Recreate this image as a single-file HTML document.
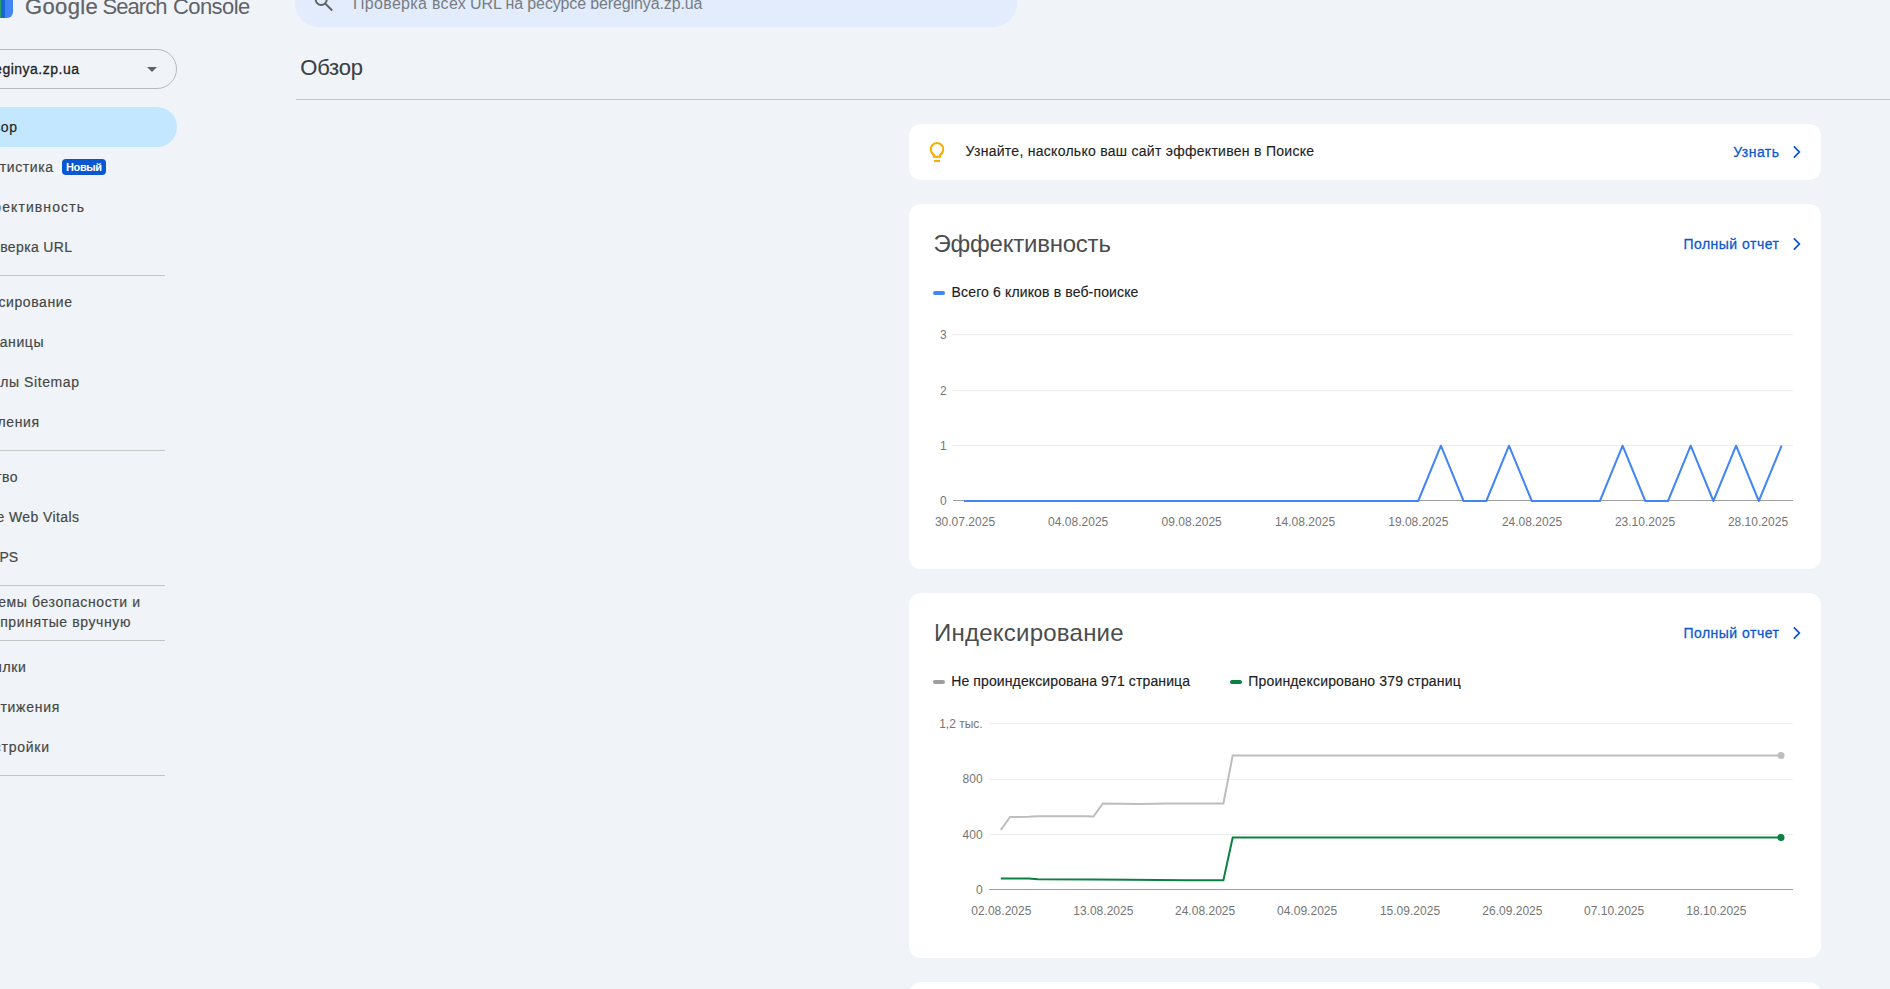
<!DOCTYPE html>
<html lang="ru"><head><meta charset="utf-8"><title>Обзор</title>
<style>
html,body{margin:0;padding:0;}
body{width:1890px;height:989px;overflow:hidden;position:relative;background:#f0f4f9;font-family:"Liberation Sans",sans-serif;}
.t{position:absolute;white-space:nowrap;margin:0;padding:0;}
.abs{position:absolute;}
.card{position:absolute;left:909px;width:912px;background:#fff;border-radius:12px;}
.hr{position:absolute;height:1px;background:#c4c7c5;}
svg{position:absolute;left:0;top:0;overflow:visible;}
</style></head><body>
<div class="abs" style="left:-11px;top:-15px;width:24px;height:33px;border-radius:6px;background:linear-gradient(90deg,#2da160 0,#2da160 12.1px,#1967d2 12.1px,#1967d2 16px,#4285f4 16px);"></div>
<div id="logoA" class="t " style="top:-3.62px;font-size:22px;line-height:22px;color:#5f6368;font-weight:400;letter-spacing:0.349px;-webkit-text-stroke:0.25px #5f6368;left:25.00px;">Google</div>
<div id="logoB" class="t " style="top:-3.62px;font-size:22px;line-height:22px;color:#5f6368;font-weight:400;letter-spacing:-0.964px;left:102.60px;">Search</div>
<div id="logoC" class="t " style="top:-3.62px;font-size:22px;line-height:22px;color:#5f6368;font-weight:400;letter-spacing:-0.553px;left:172.90px;">Console</div>
<div class="abs" style="left:295px;top:-21px;width:722px;height:48px;border-radius:24px;background:#e2ecfc;"></div>
<svg width="1890" height="989" viewBox="0 0 1890 989"><g fill="none" stroke="#5f6368" stroke-width="2"><circle cx="321.2" cy="-0.5" r="5.5"/><path d="M325.2 3.5 L332.2 10.5"/></g></svg>
<div id="searchA" class="t " style="top:-3.84px;font-size:16px;line-height:16px;color:#777c82;font-weight:400;letter-spacing:0.318px;left:353.00px;">Проверка всех</div>
<div id="searchB" class="t " style="top:-3.84px;font-size:16px;line-height:16px;color:#777c82;font-weight:400;letter-spacing:-0.116px;left:470.10px;">URL на ресурсе bereginya.zp.ua</div>
<div id="title" class="t " style="top:57.38px;font-size:22px;line-height:22px;color:#3c4043;font-weight:400;letter-spacing:-0.212px;-webkit-text-stroke:0.1px #3c4043;left:300.30px;">Обзор</div>
<div class="hr" style="left:296px;top:99px;width:1594px;"></div>
<div class="abs" style="left:-60px;top:49px;width:235px;height:38px;border:1px solid #b7babd;border-radius:20px;"></div>
<div id="prop" class="t " style="top:62.15px;font-size:14px;line-height:14px;color:#1f1f1f;font-weight:400;letter-spacing:0.500px;-webkit-text-stroke:0.3px #1f1f1f;right:1810.50px;">bereginya.zp.ua</div>
<svg width="1890" height="989" viewBox="0 0 1890 989"><path d="M147 67 L157 67 L152 72 Z" fill="#5f6368"/></svg>
<div class="abs" style="left:-60px;top:107px;width:237px;height:40px;border-radius:20px;background:#c2e7ff;"></div>
<div id="s1" class="t " style="top:120.15px;font-size:14px;line-height:14px;color:#1f1f1f;font-weight:400;letter-spacing:0.600px;-webkit-text-stroke:0.18px #1f1f1f;right:1872.40px;">Обзор</div>
<div id="s2" class="t " style="top:160.15px;font-size:14px;line-height:14px;color:#444746;font-weight:400;letter-spacing:0.600px;-webkit-text-stroke:0.18px #444746;right:1836.40px;">Статистика</div>
<div id="s3" class="t " style="top:200.15px;font-size:14px;line-height:14px;color:#444746;font-weight:400;letter-spacing:1.100px;-webkit-text-stroke:0.18px #444746;right:1804.90px;">Эффективность</div>
<div id="s4" class="t " style="top:240.15px;font-size:14px;line-height:14px;color:#444746;font-weight:400;letter-spacing:0.350px;-webkit-text-stroke:0.18px #444746;right:1817.65px;">Проверка URL</div>
<div id="s5" class="t " style="top:295.15px;font-size:14px;line-height:14px;color:#444746;font-weight:400;letter-spacing:0.600px;-webkit-text-stroke:0.18px #444746;right:1817.40px;">Индексирование</div>
<div id="s6" class="t " style="top:335.15px;font-size:14px;line-height:14px;color:#444746;font-weight:400;letter-spacing:0.600px;-webkit-text-stroke:0.18px #444746;right:1845.90px;">Страницы</div>
<div id="s7" class="t " style="top:375.15px;font-size:14px;line-height:14px;color:#444746;font-weight:400;letter-spacing:0.600px;-webkit-text-stroke:0.18px #444746;right:1810.40px;">Файлы Sitemap</div>
<div id="s8" class="t " style="top:415.15px;font-size:14px;line-height:14px;color:#444746;font-weight:400;letter-spacing:0.600px;-webkit-text-stroke:0.18px #444746;right:1850.40px;">Удаления</div>
<div id="s9" class="t " style="top:470.15px;font-size:14px;line-height:14px;color:#444746;font-weight:400;letter-spacing:0.600px;-webkit-text-stroke:0.18px #444746;right:1871.80px;">Качество</div>
<div id="s10" class="t " style="top:510.15px;font-size:14px;line-height:14px;color:#444746;font-weight:400;letter-spacing:0.400px;-webkit-text-stroke:0.18px #444746;right:1810.60px;">Core Web Vitals</div>
<div id="s11" class="t " style="top:550.15px;font-size:14px;line-height:14px;color:#444746;font-weight:400;letter-spacing:-0.200px;-webkit-text-stroke:0.18px #444746;right:1872.20px;">HTTPS</div>
<div id="s12" class="t " style="top:595.15px;font-size:14px;line-height:14px;color:#444746;font-weight:400;letter-spacing:0.600px;-webkit-text-stroke:0.18px #444746;right:1749.40px;">Проблемы безопасности и</div>
<div id="s13" class="t " style="top:615.15px;font-size:14px;line-height:14px;color:#444746;font-weight:400;letter-spacing:0.600px;-webkit-text-stroke:0.18px #444746;right:1759.00px;">меры, принятые вручную</div>
<div id="s14" class="t " style="top:660.15px;font-size:14px;line-height:14px;color:#444746;font-weight:400;letter-spacing:0.600px;-webkit-text-stroke:0.18px #444746;right:1863.60px;">Ссылки</div>
<div id="s15" class="t " style="top:700.15px;font-size:14px;line-height:14px;color:#444746;font-weight:400;letter-spacing:0.750px;-webkit-text-stroke:0.18px #444746;right:1829.85px;">Достижения</div>
<div id="s16" class="t " style="top:740.15px;font-size:14px;line-height:14px;color:#444746;font-weight:400;letter-spacing:0.750px;-webkit-text-stroke:0.18px #444746;right:1840.25px;">Настройки</div>
<div class="abs" style="left:62px;top:159px;width:44px;height:16px;border-radius:4px;background:#0b57d0;"></div>
<div id="badge" class="t " style="top:161.69px;font-size:11px;line-height:11px;color:#fff;font-weight:700;letter-spacing:-0.373px;left:66.00px;">Новый</div>
<div class="hr" style="left:0;top:275px;width:165px;"></div>
<div class="hr" style="left:0;top:450px;width:165px;"></div>
<div class="hr" style="left:0;top:585px;width:165px;"></div>
<div class="hr" style="left:0;top:640px;width:165px;"></div>
<div class="hr" style="left:0;top:775px;width:165px;"></div>
<div class="card" style="top:124px;height:56px;"></div>
<div class="card" style="top:204px;height:365px;"></div>
<div class="card" style="top:593px;height:365px;"></div>
<div class="card" style="top:982px;height:100px;"></div>
<svg width="1890" height="989" viewBox="0 0 1890 989"><g fill="none" stroke="#f9ab00" stroke-width="2"><path d="M934 156.8 L934 154.8 A6.3 6.3 0 1 1 940 154.8 L940 156.8 Z"/><path d="M934 160.9 L940 160.9"/></g></svg>
<div id="c1" class="t " style="top:144.15px;font-size:14px;line-height:14px;color:#1f1f1f;font-weight:400;letter-spacing:0.276px;-webkit-text-stroke:0.15px #1f1f1f;left:965.60px;">Узнайте, насколько ваш сайт эффективен в Поиске</div>
<div id="c1a" class="t " style="top:144.95px;font-size:14px;line-height:14px;color:#0b57d0;font-weight:400;letter-spacing:0.449px;-webkit-text-stroke:0.28px #0b57d0;left:1733.30px;">Узнать</div>
<svg width="1890" height="989" viewBox="0 0 1890 989"><path d="M1793.9 146.4 L1799.3 152 L1793.9 157.6" fill="none" stroke="#0b57d0" stroke-width="1.8"/><path d="M1793.9 238.4 L1799.3 244 L1793.9 249.6" fill="none" stroke="#0b57d0" stroke-width="1.8"/><path d="M1793.9 627.4 L1799.3 633 L1793.9 638.6" fill="none" stroke="#0b57d0" stroke-width="1.8"/></svg>
<div id="h2" class="t " style="top:231.68px;font-size:24px;line-height:24px;color:#4a4d50;font-weight:400;letter-spacing:-0.226px;left:933.50px;">Эффективность</div>
<div id="h2a" class="t " style="top:237.15px;font-size:14px;line-height:14px;color:#0b57d0;font-weight:400;letter-spacing:0.496px;-webkit-text-stroke:0.28px #0b57d0;left:1683.40px;">Полный отчет</div>
<div class="abs" style="left:933px;top:291px;width:12px;height:4px;border-radius:2px;background:#4285f4;"></div>
<div id="l1" class="t " style="top:284.95px;font-size:14px;line-height:14px;color:#202124;font-weight:400;letter-spacing:0.141px;-webkit-text-stroke:0.15px #202124;left:951.60px;">Всего 6 кликов в веб-поиске</div>
<svg width="1890" height="989" viewBox="0 0 1890 989"><path d="M953 334.5 H1793" stroke="#ececec" stroke-width="1"/><path d="M953 390.5 H1793" stroke="#ececec" stroke-width="1"/><path d="M953 445.5 H1793" stroke="#ececec" stroke-width="1"/><path d="M953 500.5 H1793" stroke="#9e9e9e" stroke-width="1"/><polyline points="964.0,501.00 986.7,501.00 1009.4,501.00 1032.1,501.00 1054.8,501.00 1077.5,501.00 1100.3,501.00 1123.0,501.00 1145.7,501.00 1168.4,501.00 1191.1,501.00 1213.8,501.00 1236.5,501.00 1259.2,501.00 1281.9,501.00 1304.7,501.00 1327.4,501.00 1350.1,501.00 1372.8,501.00 1395.5,501.00 1418.2,501.00 1440.9,445.67 1463.6,501.00 1486.3,501.00 1509.0,445.67 1531.8,501.00 1554.5,501.00 1577.2,501.00 1599.9,501.00 1622.6,445.67 1645.3,501.00 1668.0,501.00 1690.7,445.67 1713.4,501.00 1736.1,445.67 1758.8,501.00 1781.6,445.67" fill="none" stroke="#4285f4" stroke-width="2" stroke-linejoin="round"/></svg>
<div id="y1_0" class="t " style="top:328.64px;font-size:12px;line-height:12px;color:#757575;font-weight:400;right:943.30px;">3</div>
<div id="y1_1" class="t " style="top:384.64px;font-size:12px;line-height:12px;color:#757575;font-weight:400;right:943.30px;">2</div>
<div id="y1_2" class="t " style="top:439.64px;font-size:12px;line-height:12px;color:#757575;font-weight:400;right:943.30px;">1</div>
<div id="y1_3" class="t " style="top:494.64px;font-size:12px;line-height:12px;color:#757575;font-weight:400;right:943.30px;">0</div>
<div id="x1_0" class="t " style="top:515.64px;font-size:12px;line-height:12px;color:#757575;font-weight:400;letter-spacing:0.015px;left:865.00px;width:200px;text-align:center;text-indent:0.015px;">30.07.2025</div>
<div id="x1_1" class="t " style="top:515.64px;font-size:12px;line-height:12px;color:#757575;font-weight:400;letter-spacing:0.015px;left:978.20px;width:200px;text-align:center;text-indent:0.015px;">04.08.2025</div>
<div id="x1_2" class="t " style="top:515.64px;font-size:12px;line-height:12px;color:#757575;font-weight:400;letter-spacing:0.015px;left:1091.70px;width:200px;text-align:center;text-indent:0.015px;">09.08.2025</div>
<div id="x1_3" class="t " style="top:515.64px;font-size:12px;line-height:12px;color:#757575;font-weight:400;letter-spacing:0.015px;left:1205.00px;width:200px;text-align:center;text-indent:0.015px;">14.08.2025</div>
<div id="x1_4" class="t " style="top:515.64px;font-size:12px;line-height:12px;color:#757575;font-weight:400;letter-spacing:0.015px;left:1318.30px;width:200px;text-align:center;text-indent:0.015px;">19.08.2025</div>
<div id="x1_5" class="t " style="top:515.64px;font-size:12px;line-height:12px;color:#757575;font-weight:400;letter-spacing:0.015px;left:1432.00px;width:200px;text-align:center;text-indent:0.015px;">24.08.2025</div>
<div id="x1_6" class="t " style="top:515.64px;font-size:12px;line-height:12px;color:#757575;font-weight:400;letter-spacing:0.015px;left:1545.00px;width:200px;text-align:center;text-indent:0.015px;">23.10.2025</div>
<div id="x1_7" class="t " style="top:515.64px;font-size:12px;line-height:12px;color:#757575;font-weight:400;letter-spacing:0.015px;left:1658.00px;width:200px;text-align:center;text-indent:0.015px;">28.10.2025</div>
<div id="h3" class="t " style="top:621.28px;font-size:24px;line-height:24px;color:#4a4d50;font-weight:400;letter-spacing:0.234px;left:934.00px;">Индексирование</div>
<div id="h3a" class="t " style="top:626.15px;font-size:14px;line-height:14px;color:#0b57d0;font-weight:400;letter-spacing:0.496px;-webkit-text-stroke:0.28px #0b57d0;left:1683.40px;">Полный отчет</div>
<div class="abs" style="left:933px;top:680px;width:12px;height:4px;border-radius:2px;background:#9e9e9e;"></div>
<div id="l2" class="t " style="top:674.15px;font-size:14px;line-height:14px;color:#202124;font-weight:400;letter-spacing:0.117px;-webkit-text-stroke:0.15px #202124;left:951.20px;">Не проиндексирована 971 страница</div>
<div class="abs" style="left:1230px;top:680px;width:12px;height:4px;border-radius:2px;background:#0b8043;"></div>
<div id="l3" class="t " style="top:674.15px;font-size:14px;line-height:14px;color:#202124;font-weight:400;letter-spacing:0.159px;-webkit-text-stroke:0.15px #202124;left:1248.30px;">Проиндексировано 379 страниц</div>
<svg width="1890" height="989" viewBox="0 0 1890 989"><path d="M989 723.5 H1793" stroke="#ececec" stroke-width="1"/><path d="M989 779.5 H1793" stroke="#ececec" stroke-width="1"/><path d="M989 834.5 H1793" stroke="#ececec" stroke-width="1"/><path d="M989 889.5 H1793" stroke="#9e9e9e" stroke-width="1"/><polyline points="1000.8,829.8 1010.1,817 1028.6,816.8 1037.9,816.3 1084.3,816.3 1093.5,816.6 1102.8,803.4 1139.9,804 1167.8,803.4 1223.4,803.4 1232.7,755.6 1781,755.6" fill="none" stroke="#bdbdbd" stroke-width="2"/><polyline points="1000.8,878.4 1028.6,878.4 1037.9,879.2 1093.5,879.4 1130.6,879.8 1186.3,880.2 1223.4,880.3 1232.7,837.5 1781,837.5" fill="none" stroke="#0b8043" stroke-width="2"/><circle cx="1781" cy="755.6" r="3.5" fill="#bdbdbd"/><circle cx="1781" cy="837.5" r="3.5" fill="#0b8043"/></svg>
<div id="y2_0" class="t " style="top:717.64px;font-size:12px;line-height:12px;color:#757575;font-weight:400;right:907.40px;">1,2 тыс.</div>
<div id="y2_1" class="t " style="top:772.94px;font-size:12px;line-height:12px;color:#757575;font-weight:400;right:907.40px;">800</div>
<div id="y2_2" class="t " style="top:828.64px;font-size:12px;line-height:12px;color:#757575;font-weight:400;right:907.40px;">400</div>
<div id="y2_3" class="t " style="top:883.64px;font-size:12px;line-height:12px;color:#757575;font-weight:400;right:907.40px;">0</div>
<div id="x2_0" class="t " style="top:904.54px;font-size:12px;line-height:12px;color:#757575;font-weight:400;letter-spacing:0.015px;left:901.30px;width:200px;text-align:center;text-indent:0.015px;">02.08.2025</div>
<div id="x2_1" class="t " style="top:904.54px;font-size:12px;line-height:12px;color:#757575;font-weight:400;letter-spacing:0.015px;left:1003.30px;width:200px;text-align:center;text-indent:0.015px;">13.08.2025</div>
<div id="x2_2" class="t " style="top:904.54px;font-size:12px;line-height:12px;color:#757575;font-weight:400;letter-spacing:0.015px;left:1105.10px;width:200px;text-align:center;text-indent:0.015px;">24.08.2025</div>
<div id="x2_3" class="t " style="top:904.54px;font-size:12px;line-height:12px;color:#757575;font-weight:400;letter-spacing:0.015px;left:1207.10px;width:200px;text-align:center;text-indent:0.015px;">04.09.2025</div>
<div id="x2_4" class="t " style="top:904.54px;font-size:12px;line-height:12px;color:#757575;font-weight:400;letter-spacing:0.015px;left:1310.00px;width:200px;text-align:center;text-indent:0.015px;">15.09.2025</div>
<div id="x2_5" class="t " style="top:904.54px;font-size:12px;line-height:12px;color:#757575;font-weight:400;letter-spacing:0.015px;left:1412.40px;width:200px;text-align:center;text-indent:0.015px;">26.09.2025</div>
<div id="x2_6" class="t " style="top:904.54px;font-size:12px;line-height:12px;color:#757575;font-weight:400;letter-spacing:0.015px;left:1514.10px;width:200px;text-align:center;text-indent:0.015px;">07.10.2025</div>
<div id="x2_7" class="t " style="top:904.54px;font-size:12px;line-height:12px;color:#757575;font-weight:400;letter-spacing:0.015px;left:1616.40px;width:200px;text-align:center;text-indent:0.015px;">18.10.2025</div>
</body></html>
